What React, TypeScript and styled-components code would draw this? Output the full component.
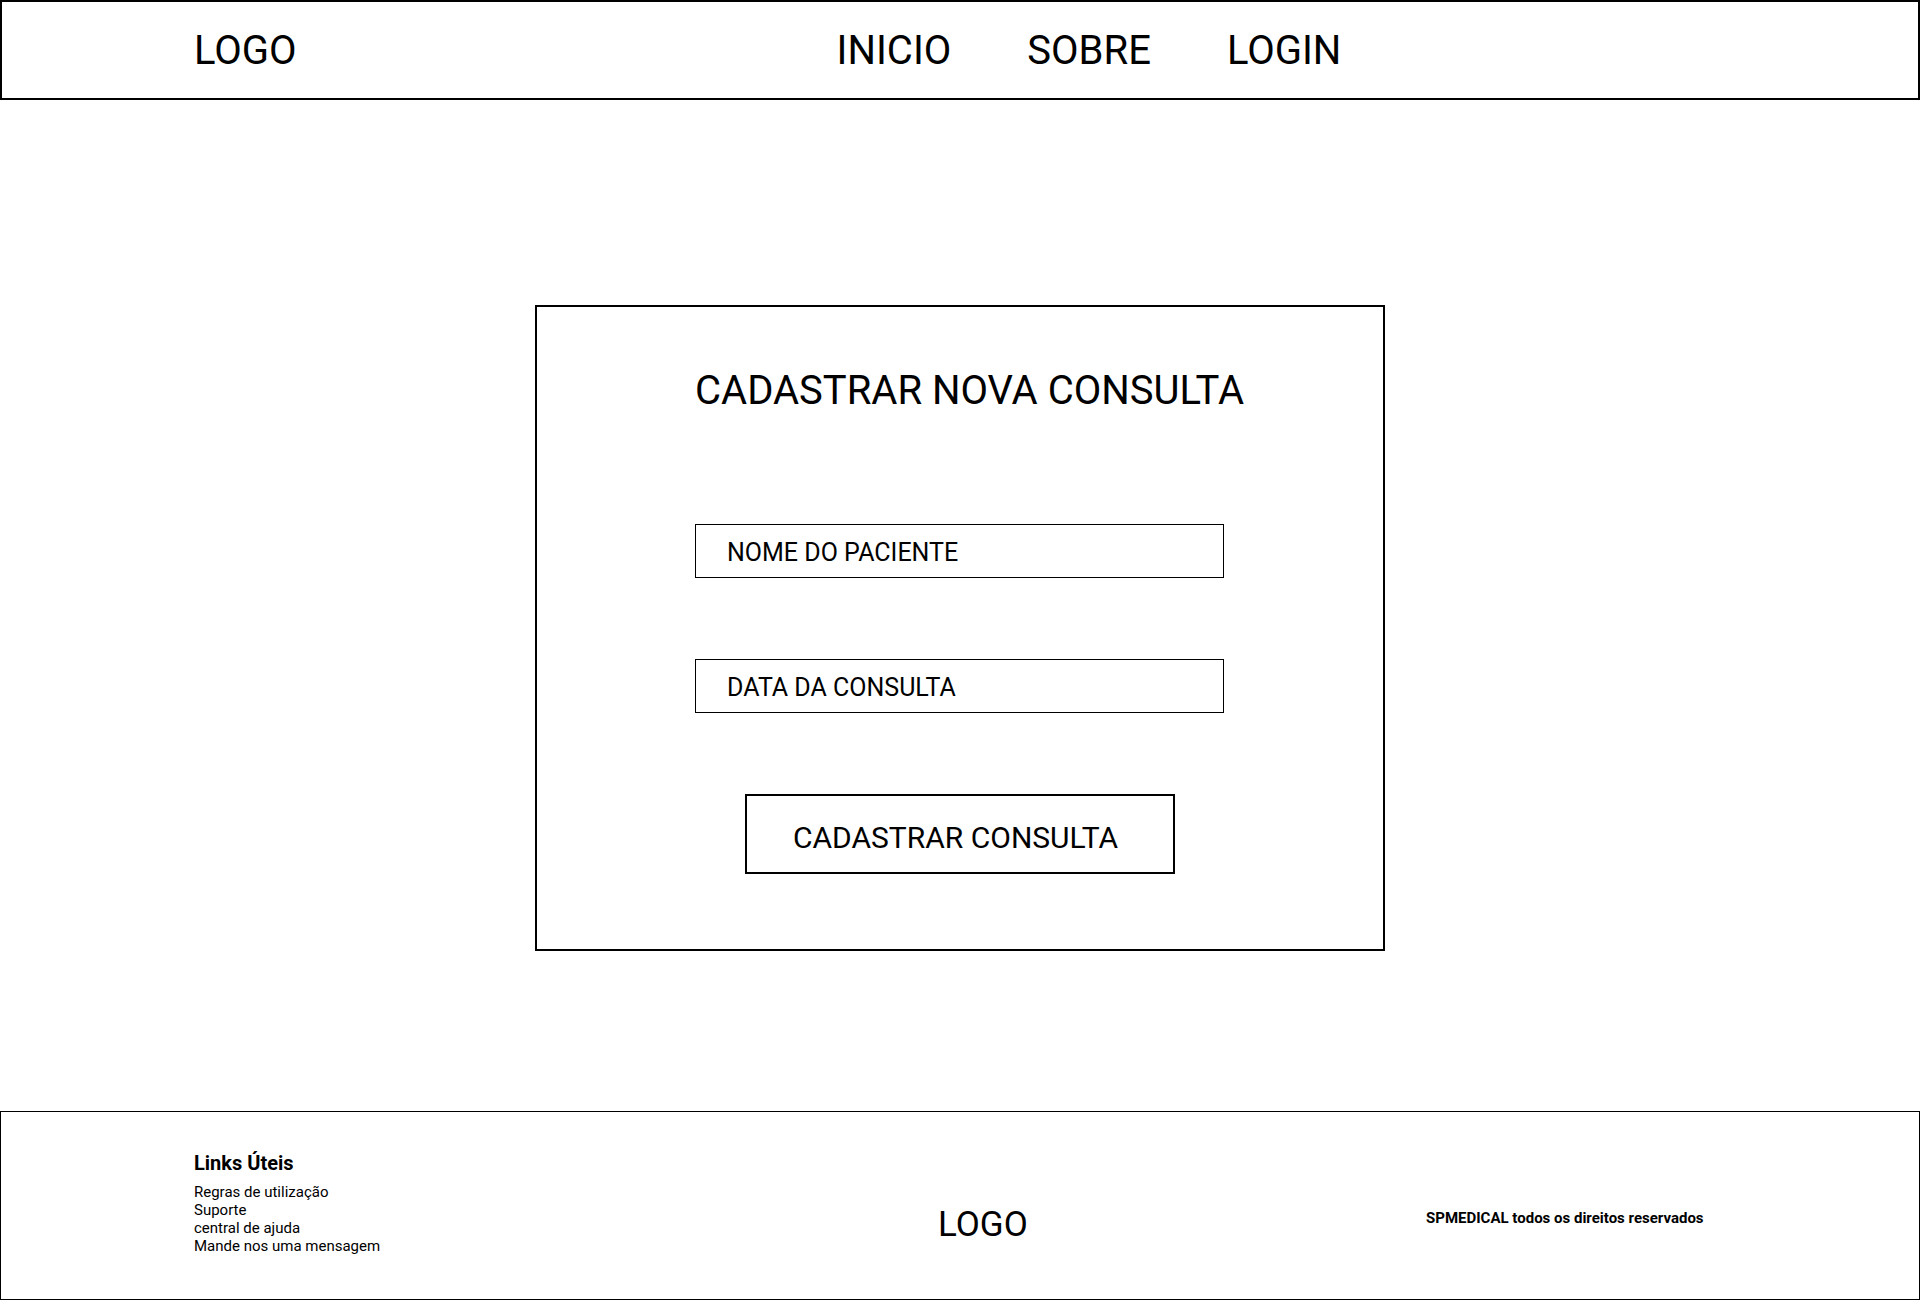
import styled, { createGlobalStyle } from "styled-components";

const GlobalStyle = createGlobalStyle`
  * {
    box-sizing: border-box;
  }
  body {
    margin: 0;
    background: #fff;
    color: #000;
    font-family: Roboto, "Liberation Sans", Arial, sans-serif;
  }
`;

const Page = styled.div`
  width: 1920px;
  min-height: 1300px;
  display: flex;
  flex-direction: column;
`;

const Header = styled.header`
  height: 100px;
  border: 2px solid #000;
  display: flex;
  align-items: center;
  padding-left: 192px;
`;

const Logo = styled.span<{ size: number }>`
  font-size: ${(p) => p.size}px;
  font-weight: 400;
`;

const Nav = styled.nav`
  display: flex;
  gap: 76px;
  margin-left: 540px;
`;

const NavLink = styled.a`
  font-size: 40px;
  color: #000;
  text-decoration: none;
  cursor: pointer;
`;

const Main = styled.main`
  display: flex;
  justify-content: center;
  padding-top: 205px;
`;

const Card = styled.section`
  width: 850px;
  border: 2px solid #000;
  padding: 60px 158px 75px;
  display: flex;
  flex-direction: column;
`;

const Title = styled.h1`
  margin: 0;
  font-size: 40px;
  font-weight: 400;
  white-space: nowrap;
`;

const Form = styled.form`
  width: 529px;
  margin-top: 110px;
  display: flex;
  flex-direction: column;
  gap: 81px;
`;

const Field = styled.input`
  height: 54px;
  width: 100%;
  border: 1px solid #000;
  padding: 3px 0 0 31px;
  font-family: Roboto, "Liberation Sans", Arial, sans-serif;
  font-size: 25px;
  color: #000;
  outline: none;
  &::placeholder {
    color: #000;
    opacity: 1;
  }
`;

const SubmitButton = styled.button`
  align-self: center;
  width: 430px;
  height: 80px;
  border: 2px solid #000;
  background: #fff;
  color: #000;
  font-family: Roboto, "Liberation Sans", Arial, sans-serif;
  font-size: 30px;
  padding: 7px 8px 0 0;
  cursor: pointer;
`;

const Footer = styled.footer`
  margin-top: auto;
  height: 189px;
  border: 1px solid #000;
  padding: 39px 0 0 193px;
  display: grid;
  grid-template-columns: 744px 488px auto;
  align-items: start;
`;

const LinksColumn = styled.div`
  display: flex;
  flex-direction: column;
`;

const LinksHeading = styled.h4`
  margin: 0 0 8px;
  font-size: 20px;
  font-weight: 700;
`;

const LinkItem = styled.a`
  font-size: 15px;
  color: #000;
  text-decoration: none;
`;

const FooterLogo = styled(Logo)`
  margin-top: 53px;
`;

const Copyright = styled.p`
  margin: 58px 0 0;
  font-size: 15px;
  font-weight: 700;
`;

const navItems = ["INICIO", "SOBRE", "LOGIN"];
const usefulLinks = [
  "Regras de utilização",
  "Suporte",
  "central de ajuda",
  "Mande nos uma mensagem",
];

const App = () => {
  return (
    <>
      <GlobalStyle />
      <Page>
        <Header>
          <Logo size={40}>LOGO</Logo>
          <Nav>
            {navItems.map((item) => (
              <NavLink key={item}>{item}</NavLink>
            ))}
          </Nav>
        </Header>
        <Main>
          <Card>
            <Title>CADASTRAR NOVA CONSULTA</Title>
            <Form onSubmit={(e) => e.preventDefault()}>
              <Field placeholder="NOME DO PACIENTE" />
              <Field placeholder="DATA DA CONSULTA" />
              <SubmitButton type="submit">CADASTRAR CONSULTA</SubmitButton>
            </Form>
          </Card>
        </Main>
        <Footer>
          <LinksColumn>
            <LinksHeading>Links Úteis</LinksHeading>
            {usefulLinks.map((link) => (
              <LinkItem key={link}>{link}</LinkItem>
            ))}
          </LinksColumn>
          <FooterLogo size={35}>LOGO</FooterLogo>
          <Copyright>SPMEDICAL todos os direitos reservados</Copyright>
        </Footer>
      </Page>
    </>
  );
};

export default App;
